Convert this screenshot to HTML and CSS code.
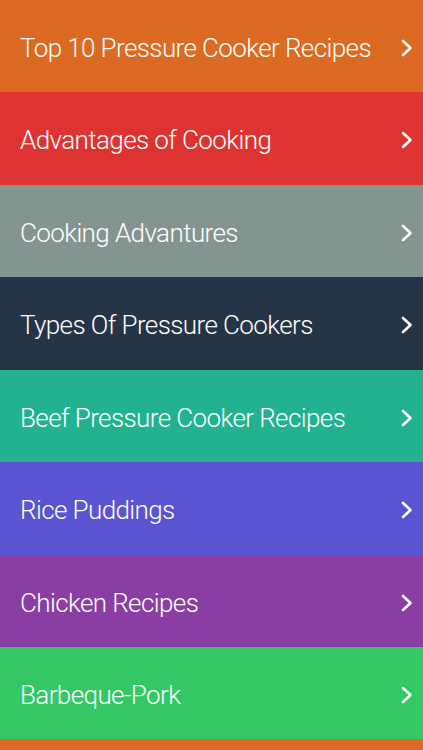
FILE: index.html
```html
<!DOCTYPE html>
<html lang="en">
<head>
    <meta charset="UTF-8">
    <meta name="viewport" content="width=device-width, initial-scale=1.0">
    <title>Pressure Cooker Recipes</title>
    <link rel="stylesheet" href="styles.css">
</head>
<body>
  <ul class="menu">
    <li class="item orange"><span>Top 10 Pressure Cooker Recipes</span><svg class="chev" viewBox="0 0 12 18"><path d="M2 2 L9.5 9 L2 16"/></svg></li>
    <li class="item red tall"><span>Advantages of Cooking</span><svg class="chev" viewBox="0 0 12 18"><path d="M2 2 L9.5 9 L2 16"/></svg></li>
    <li class="item gray"><span>Cooking Advantures</span><svg class="chev" viewBox="0 0 12 18"><path d="M2 2 L9.5 9 L2 16"/></svg></li>
    <li class="item navy tall"><span>Types Of Pressure Cookers</span><svg class="chev" viewBox="0 0 12 18"><path d="M2 2 L9.5 9 L2 16"/></svg></li>
    <li class="item teal"><span>Beef Pressure Cooker Recipes</span><svg class="chev" viewBox="0 0 12 18"><path d="M2 2 L9.5 9 L2 16"/></svg></li>
    <li class="item blue tall"><span>Rice Puddings</span><svg class="chev" viewBox="0 0 12 18"><path d="M2 2 L9.5 9 L2 16"/></svg></li>
    <li class="item purple"><span>Chicken Recipes</span><svg class="chev" viewBox="0 0 12 18"><path d="M2 2 L9.5 9 L2 16"/></svg></li>
    <li class="item green"><span>Barbeque-Pork</span><svg class="chev" viewBox="0 0 12 18"><path d="M2 2 L9.5 9 L2 16"/></svg></li>
  </ul>
</body>
</html>
```

FILE: styles.css
```css
body {
    margin: 0;
    padding: 0;
    font-family: Roboto, "Liberation Sans", sans-serif;
    background-color: #dc6a22;
    height: 750px;
    overflow: hidden;
}
.menu {
    list-style: none;
    margin: 0;
    padding: 0;
}
.item {
    height: 92px;
    display: flex;
    align-items: center;
    justify-content: space-between;
    padding: 0 10px 0 20px;
    color: white;
    font-size: 26px;
    font-weight: 300;
    letter-spacing: -0.6px;
}
.item span {
    padding-top: 3px;
}
.tall {
    height: 93px;
}
.chev {
    width: 12px;
    height: 18px;
    margin-top: 3px;
    fill: none;
    stroke: white;
    stroke-width: 2.6;
    stroke-linecap: round;
    stroke-linejoin: round;
}
.orange { background-color: #dc6a22; }
.red { background-color: #de3431; }
.gray { background-color: #849591; }
.navy { background-color: #253447; }
.teal { background-color: #23b28f; }
.blue { background-color: #5a53d2; }
.purple { background-color: #8a3ea3; }
.green { background-color: #33c865; }
```
